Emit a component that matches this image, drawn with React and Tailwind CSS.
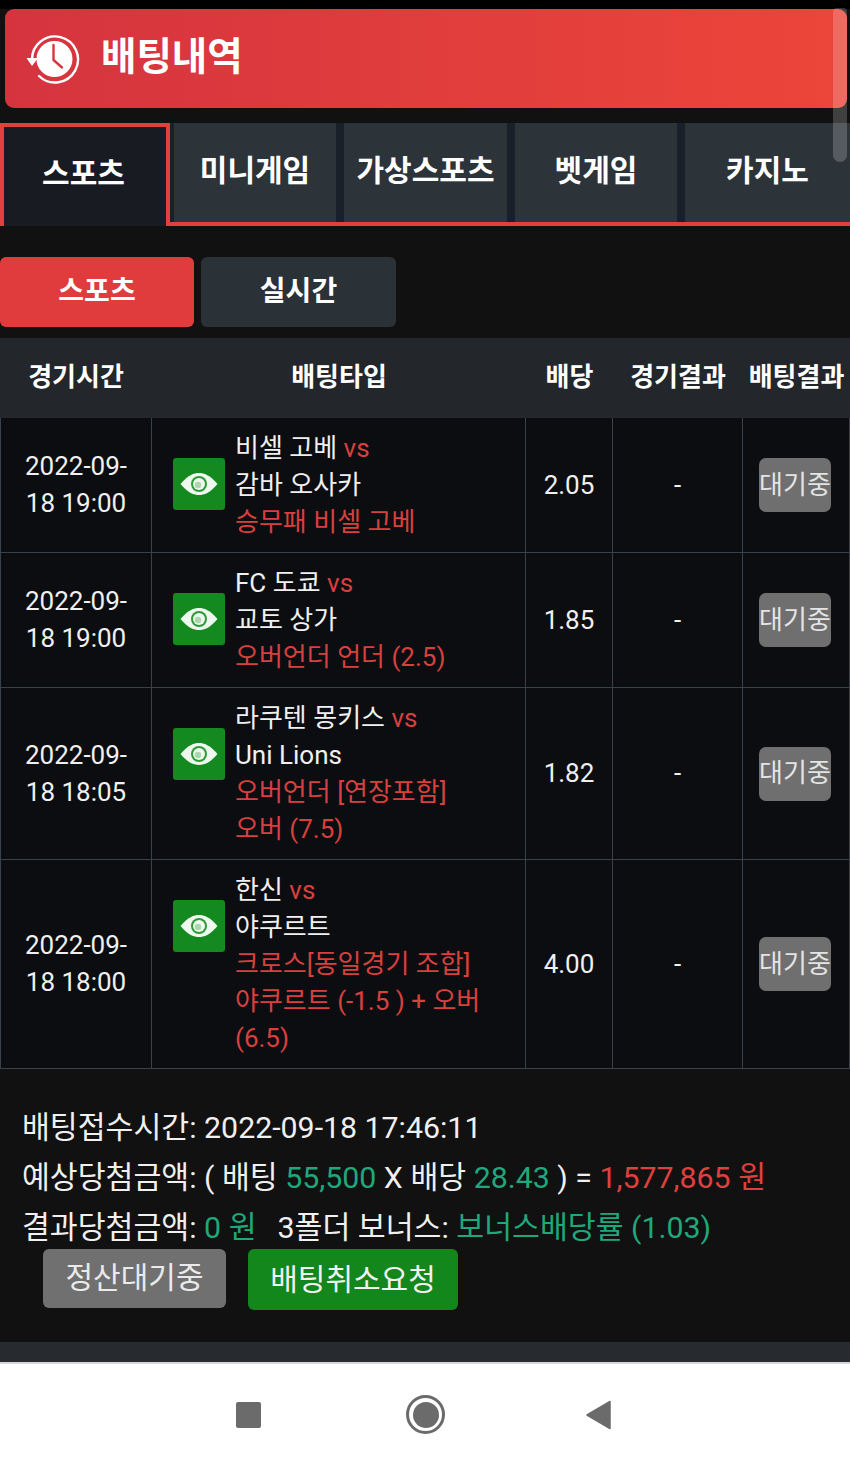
import React from 'react';

const bets = [
  { date: ['2022-09-', '18 19:00'], home: '비셀 고베', away: '감바 오사카', pick: ['승무패 비셀 고베'], odds: '2.05' },
  { date: ['2022-09-', '18 19:00'], home: 'FC 도쿄', away: '교토 상가', pick: ['오버언더 언더 (2.5)'], odds: '1.85' },
  { date: ['2022-09-', '18 18:05'], home: '라쿠텐 몽키스', away: 'Uni Lions', pick: ['오버언더 [연장포함]', '오버 (7.5)'], odds: '1.82' },
  { date: ['2022-09-', '18 18:00'], home: '한신', away: '야쿠르트', pick: ['크로스[동일경기 조합]', '야쿠르트 (-1.5 ) + 오버', '(6.5)'], odds: '4.00' },
];

const tabs = [
  { label: '미니게임', width: 'w-[162px]' },
  { label: '가상스포츠', width: 'w-[163px]' },
  { label: '벳게임', width: 'w-[162px]' },
  { label: '카지노', width: 'w-[165px]' },
];

const columns = 'grid grid-cols-[152px_374px_87px_130px_107px]';

function HistoryIcon() {
  return (
    <svg width="56" height="52" viewBox="0 0 56 52" fill="none">
      <circle cx="28.5" cy="26" r="18" fill="#fff" />
      <path d="M6 27 A23 23 0 1 1 13 43" stroke="#fff" strokeWidth="2.4" strokeLinecap="round" />
      <path d="M0.5 25 L12 25 L6 33 Z" fill="#fff" />
      <path d="M27.5 12 V27 L36 34.5" stroke="#d8363f" strokeWidth="2.4" strokeLinejoin="round" strokeLinecap="round" />
    </svg>
  );
}

function EyeButton() {
  return (
    <div className="mt-[40px] ml-[21px] flex h-[52px] w-[52px] shrink-0 items-center justify-center rounded-[3px] bg-[#13891f]">
      <svg width="38" height="22" viewBox="0 0 38 22">
        <path d="M0.5 11 C8 2 14 0 19 0 C24 0 30 2 37.5 11 C30 20 24 22 19 22 C14 22 8 20 0.5 11 Z" fill="#eef8ee" />
        <circle cx="19" cy="11" r="8" fill="#2f9a3a" />
        <circle cx="19" cy="11" r="6" fill="#eef8ee" />
        <circle cx="18" cy="12" r="3.2" fill="#a9d8ae" />
      </svg>
    </div>
  );
}

function BetRow({ bet }) {
  const cell = 'border-r border-b border-[#39414b] flex items-center justify-center';
  return (
    <div className={columns}>
      <div className={`${cell} border-l text-center leading-[37px]`}>
        <div>
          {bet.date.map((line) => (
            <div key={line}>{line}</div>
          ))}
        </div>
      </div>
      <div className="flex border-r border-b border-[#39414b]">
        <EyeButton />
        <div className="ml-[10px] pt-[12px] pb-[11px] leading-[37px]">
          <div>
            {bet.home} <span className="text-[#d8403e]">vs</span>
          </div>
          <div>{bet.away}</div>
          {bet.pick.map((line) => (
            <div key={line} className="text-[#d8403e]">{line}</div>
          ))}
        </div>
      </div>
      <div className={cell}>{bet.odds}</div>
      <div className={cell}>-</div>
      <div className={cell}>
        <div className="mr-[2px] flex h-[54px] w-[72px] items-center justify-center rounded-[7px] bg-[#6f6f6f] text-[#e4e4e4]">대기중</div>
      </div>
    </div>
  );
}

export default function App() {
  return (
    <div className="relative flex h-[1465px] w-[850px] flex-col overflow-hidden bg-[#111111] font-[family-name:Roboto,'Noto_Sans_CJK_KR',sans-serif] text-[26px] text-[#f0f0f0]">
      <div className="h-[9px] bg-black" />

      {/* title */}
      <div className="ml-[5px] mr-[3px] flex h-[99px] items-center rounded-[9px] bg-linear-to-r from-[#d5343f] to-[#ec4539] pl-[21px]">
        <HistoryIcon />
        <h1 className="ml-[19px] pb-[3px] text-[38.5px] font-bold text-white">배팅내역</h1>
      </div>

      {/* main tabs */}
      <div className="mt-[15px] flex h-[103px] border-b-4 border-[#e04040] bg-[#1a2029]">
        <div className="z-10 -mb-1 flex h-[103px] w-[170px] items-center justify-center border-x-4 border-t-4 border-[#e04040] bg-[#181c22] pr-[3px] pb-[6px] text-[30px] font-bold text-white">
          스포츠
        </div>
        <div className="ml-1 flex gap-2">
          {tabs.map((tab) => (
            <div key={tab.label} className={`${tab.width} flex items-center justify-center bg-[#2c3339] pb-[4px] text-[30px] font-bold text-white`}>
              {tab.label}
            </div>
          ))}
        </div>
      </div>

      {/* sub tabs */}
      <div className="mt-[31px] flex gap-[7px]">
        <div className="flex h-[70px] w-[194px] items-center justify-center rounded-[6px] bg-[#e03c3e] pb-[1px] text-[28px] font-bold text-white">스포츠</div>
        <div className="flex h-[70px] w-[195px] items-center justify-center rounded-[6px] bg-[#2a3238] text-[28px] font-bold text-white">실시간</div>
      </div>

      {/* table */}
      <div className={`${columns} mt-[11px] h-[80px] items-center bg-[#23272b] pb-[2px] text-center font-bold text-white`}>
        <div>경기시간</div>
        <div>배팅타입</div>
        <div>배당</div>
        <div>경기결과</div>
        <div className="whitespace-nowrap">배팅결과</div>
      </div>
      <div className="bg-[#0c0d10]">
        {bets.map((bet) => (
          <BetRow key={bet.home} bet={bet} />
        ))}
      </div>

      {/* summary */}
      <div className="flex-1 px-[22px] pt-[34px] text-[30.3px] leading-[50px]">
        <div>배팅접수시간: 2022-09-18 17:46:11</div>
        <div>
          예상당첨금액: ( 배팅 <span className="text-[#1fa87c]">55,500</span> X 배당 <span className="text-[#1fa87c]">28.43</span> ) = <span className="text-[#e0403c]">1,577,865 원</span>
        </div>
        <div>
          결과당첨금액: <span className="text-[#1fa87c]">0 원</span>
          <span className="ml-[21px]">3폴더 보너스: </span>
          <span className="text-[#1fa87c]">보너스배당률 (1.03)</span>
        </div>
        <div className="ml-[21px] -mt-[4px] flex items-start gap-[22px] text-[30px]">
          <div className="flex h-[59px] w-[183px] items-center justify-center rounded-[6px] bg-[#707070] pb-[1px] text-[#eaeaea]">정산대기중</div>
          <div className="flex h-[61px] w-[210px] items-center justify-center rounded-[6px] bg-[#13861c] text-[#f2f2f2]">배팅취소요청</div>
        </div>
      </div>

      <div className="h-[22px] border-b-2 border-[#d5d8d8] bg-[#272b2f]" />

      {/* android nav bar */}
      <div className="flex h-[101px] items-center bg-white pl-[236px]">
        <div className="h-[26px] w-[25px] rounded-[2px] bg-[#6b6b6b]" />
        <div className="ml-[145px] flex h-[39px] w-[39px] items-center justify-center rounded-full border-[3px] border-[#6b6b6b]">
          <div className="h-[26px] w-[26px] rounded-full bg-[#6b6b6b]" />
        </div>
        <svg className="ml-[141px]" width="26" height="30" viewBox="0 0 26 30">
          <path d="M24 1.5 V28.5 L1 15 Z" fill="#6b6b6b" stroke="#6b6b6b" strokeWidth="1.5" strokeLinejoin="round" />
        </svg>
      </div>

      {/* scrollbar overlay */}
      <div className="absolute right-[3px] top-[8px] h-[154px] w-[14px] rounded-b-[7px] rounded-t-[4px] bg-white/20" />
    </div>
  );
}
